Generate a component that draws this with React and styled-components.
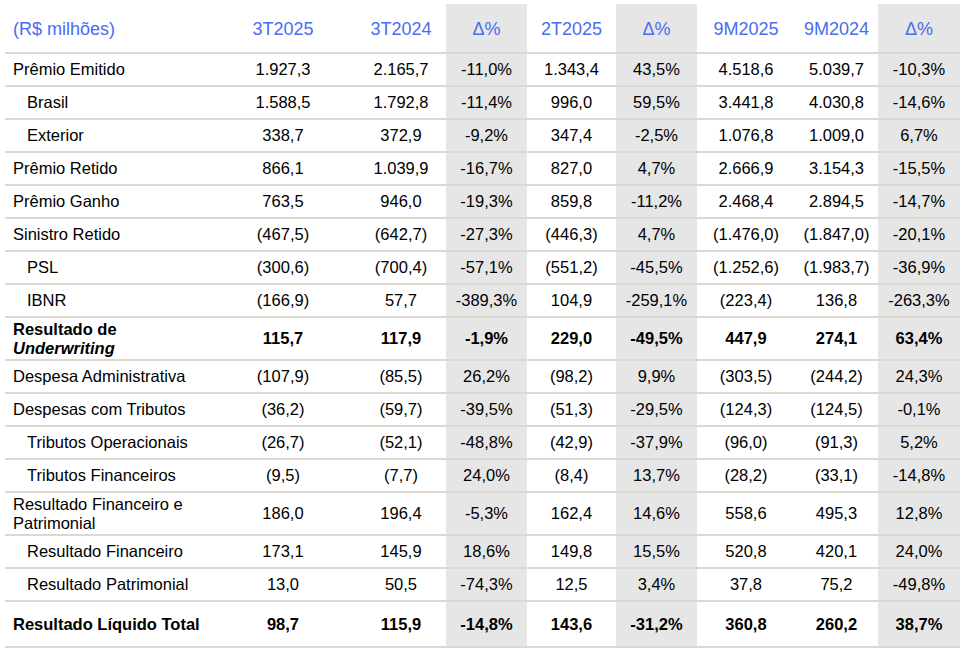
import React from 'react';
import styled, { createGlobalStyle } from 'styled-components';

const GlobalStyle = createGlobalStyle`
  body {
    margin: 0;
    background: #ffffff;
    font-family: "Liberation Sans", Arial, sans-serif;
    color: #000000;
  }
`;

const Page = styled.div`
  padding: 4px 5px 0 5px;
`;

const Table = styled.table`
  border-collapse: collapse;
  table-layout: fixed;
  width: 955px;
`;

const HeadCell = styled.th`
  height: 46px;
  padding: 2px 0 0 0;
  font-size: 18px;
  font-weight: normal;
  color: #4a6cf2;
  text-align: ${(p) => (p.$left ? 'left' : 'center')};
  padding-left: ${(p) => (p.$left ? '8px' : '0')};
  background: ${(p) => (p.$shade ? '#e6e6e6' : 'transparent')};
  border-bottom: 2px solid #ddd8d0;
  vertical-align: middle;
`;

const Row = styled.tr`
  height: ${(p) => p.$height || 33}px;
`;

const Label = styled.td`
  padding: 0 0 0 ${(p) => (p.$level === 2 ? 22 : 8)}px;
  font-size: 16.5px;
  line-height: 19px;
  font-weight: ${(p) => (p.$bold ? 'bold' : 'normal')};
  border-bottom: 2px solid #ddd8d0;
  vertical-align: middle;
  white-space: nowrap;
`;

const Cell = styled.td`
  padding: 0;
  font-size: 16.5px;
  text-align: center;
  font-weight: ${(p) => (p.$bold ? 'bold' : 'normal')};
  background: ${(p) => (p.$shade ? '#e6e6e6' : 'transparent')};
  border-bottom: 2px solid #ddd8d0;
  vertical-align: middle;
`;

const widths = [205, 146, 90, 81, 89, 81, 98, 83, 82];
const heads = ['3T2025', '3T2024', 'Δ%', '2T2025', 'Δ%', '9M2025', '9M2024', 'Δ%'];
const shaded = [false, false, true, false, true, false, false, true];

const rows = [
  { label: 'Prêmio Emitido', values: ['1.927,3', '2.165,7', '-11,0%', '1.343,4', '43,5%', '4.518,6', '5.039,7', '-10,3%'] },
  { label: 'Brasil', level: 2, values: ['1.588,5', '1.792,8', '-11,4%', '996,0', '59,5%', '3.441,8', '4.030,8', '-14,6%'] },
  { label: 'Exterior', level: 2, values: ['338,7', '372,9', '-9,2%', '347,4', '-2,5%', '1.076,8', '1.009,0', '6,7%'] },
  { label: 'Prêmio Retido', values: ['866,1', '1.039,9', '-16,7%', '827,0', '4,7%', '2.666,9', '3.154,3', '-15,5%'] },
  { label: 'Prêmio Ganho', values: ['763,5', '946,0', '-19,3%', '859,8', '-11,2%', '2.468,4', '2.894,5', '-14,7%'] },
  { label: 'Sinistro Retido', values: ['(467,5)', '(642,7)', '-27,3%', '(446,3)', '4,7%', '(1.476,0)', '(1.847,0)', '-20,1%'] },
  { label: 'PSL', level: 2, values: ['(300,6)', '(700,4)', '-57,1%', '(551,2)', '-45,5%', '(1.252,6)', '(1.983,7)', '-36,9%'] },
  { label: 'IBNR', level: 2, values: ['(166,9)', '57,7', '-389,3%', '104,9', '-259,1%', '(223,4)', '136,8', '-263,3%'] },
  {
    label: (<>Resultado de<br /><i>Underwriting</i></>),
    bold: true,
    height: 43,
    values: ['115,7', '117,9', '-1,9%', '229,0', '-49,5%', '447,9', '274,1', '63,4%'],
  },
  { label: 'Despesa Administrativa', values: ['(107,9)', '(85,5)', '26,2%', '(98,2)', '9,9%', '(303,5)', '(244,2)', '24,3%'] },
  { label: 'Despesas com Tributos', values: ['(36,2)', '(59,7)', '-39,5%', '(51,3)', '-29,5%', '(124,3)', '(124,5)', '-0,1%'] },
  { label: 'Tributos Operacionais', level: 2, values: ['(26,7)', '(52,1)', '-48,8%', '(42,9)', '-37,9%', '(96,0)', '(91,3)', '5,2%'] },
  { label: 'Tributos Financeiros', level: 2, values: ['(9,5)', '(7,7)', '24,0%', '(8,4)', '13,7%', '(28,2)', '(33,1)', '-14,8%'] },
  {
    label: (<>Resultado Financeiro e<br />Patrimonial</>),
    height: 43,
    values: ['186,0', '196,4', '-5,3%', '162,4', '14,6%', '558,6', '495,3', '12,8%'],
  },
  { label: 'Resultado Financeiro', level: 2, values: ['173,1', '145,9', '18,6%', '149,8', '15,5%', '520,8', '420,1', '24,0%'] },
  { label: 'Resultado Patrimonial', level: 2, values: ['13,0', '50,5', '-74,3%', '12,5', '3,4%', '37,8', '75,2', '-49,8%'] },
  {
    label: 'Resultado Líquido Total',
    bold: true,
    height: 46,
    values: ['98,7', '115,9', '-14,8%', '143,6', '-31,2%', '360,8', '260,2', '38,7%'],
  },
];

const App = () => (
  <Page>
    <GlobalStyle />
    <Table>
      <colgroup>
        {widths.map((w, i) => <col key={i} style={{ width: `${w}px` }} />)}
      </colgroup>
      <thead>
        <tr>
          <HeadCell $left>(R$ milhões)</HeadCell>
          {heads.map((h, i) => (
            <HeadCell key={i} $shade={shaded[i]}>{h}</HeadCell>
          ))}
        </tr>
      </thead>
      <tbody>
        {rows.map((r, idx) => (
          <Row key={idx} $height={r.height}>
            <Label $level={r.level} $bold={r.bold}>{r.label}</Label>
            {r.values.map((v, i) => (
              <Cell key={i} $shade={shaded[i]} $bold={r.bold}>{v}</Cell>
            ))}
          </Row>
        ))}
      </tbody>
    </Table>
  </Page>
);

export default App;
